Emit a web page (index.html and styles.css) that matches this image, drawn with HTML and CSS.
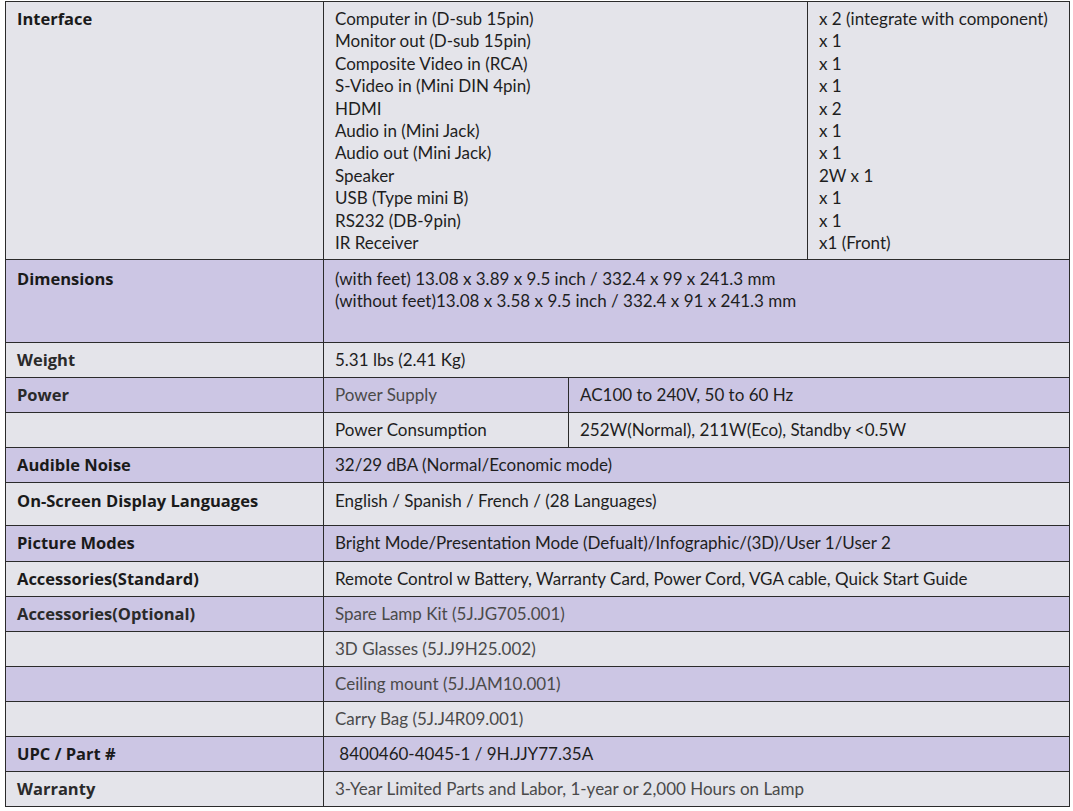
FILE: index.html
```html
<!DOCTYPE html>
<html>
<head>
<meta charset="utf-8">
<link rel="stylesheet" href="styles.css">
</head>
<body>
<table class="spec">
  <colgroup>
    <col class="c-label">
    <col class="c-a">
    <col class="c-b">
    <col class="c-c">
  </colgroup>
  <tr class="gray r-interface">
    <th>Interface</th>
    <td colspan="2">Computer in (D-sub 15pin)<br>Monitor out (D-sub 15pin)<br>Composite Video in (RCA)<br>S-Video in (Mini DIN 4pin)<br>HDMI<br>Audio in (Mini Jack)<br>Audio out (Mini Jack)<br>Speaker<br>USB (Type mini B)<br>RS232 (DB-9pin)<br>IR Receiver</td>
    <td>x 2 (integrate with component)<br>x 1<br>x 1<br>x 1<br>x 2<br>x 1<br>x 1<br>2W x 1<br>x 1<br>x 1<br>x1 (Front)</td>
  </tr>
  <tr class="purple r-dim">
    <th>Dimensions</th>
    <td colspan="3">(with feet) 13.08 x 3.89 x 9.5 inch / 332.4 x 99 x 241.3 mm<br>(without feet)13.08 x 3.58 x 9.5 inch / 332.4 x 91 x 241.3 mm</td>
  </tr>
  <tr class="gray r-std">
    <th class="soft">Weight</th>
    <td colspan="3">5.31 lbs (2.41 Kg)</td>
  </tr>
  <tr class="purple r-std">
    <th class="soft">Power</th>
    <td class="muted">Power Supply</td>
    <td colspan="2">AC100 to 240V, 50 to 60 Hz</td>
  </tr>
  <tr class="gray r-std">
    <th></th>
    <td>Power Consumption</td>
    <td colspan="2">252W(Normal), 211W(Eco), Standby &lt;0.5W</td>
  </tr>
  <tr class="purple r-std">
    <th>Audible Noise</th>
    <td colspan="3">32/29 dBA (Normal/Economic mode)</td>
  </tr>
  <tr class="gray r-osd">
    <th>On-Screen Display Languages</th>
    <td colspan="3">English / Spanish / French / (28 Languages)</td>
  </tr>
  <tr class="purple r-pm">
    <th>Picture Modes</th>
    <td colspan="3">Bright Mode/Presentation Mode (Defualt)/Infographic/(3D)/User 1/User 2</td>
  </tr>
  <tr class="gray r-std">
    <th>Accessories(Standard)</th>
    <td colspan="3">Remote Control w Battery, Warranty Card, Power Cord, VGA cable, Quick Start Guide</td>
  </tr>
  <tr class="purple r-std">
    <th class="soft">Accessories(Optional)</th>
    <td colspan="3" class="muted">Spare Lamp Kit (5J.JG705.001)</td>
  </tr>
  <tr class="gray r-std">
    <th></th>
    <td colspan="3" class="muted">3D Glasses (5J.J9H25.002)</td>
  </tr>
  <tr class="purple r-std">
    <th></th>
    <td colspan="3" class="muted">Ceiling mount (5J.JAM10.001)</td>
  </tr>
  <tr class="gray r-std">
    <th></th>
    <td colspan="3" class="muted">Carry Bag (5J.J4R09.001)</td>
  </tr>
  <tr class="purple r-std">
    <th>UPC / Part #</th>
    <td colspan="3">&nbsp;8400460-4045-1 / 9H.JJY77.35A</td>
  </tr>
  <tr class="gray r-std">
    <th class="soft">Warranty</th>
    <td colspan="3" class="muted">3-Year Limited Parts and Labor, 1-year or 2,000 Hours on Lamp</td>
  </tr>
</table>
</body>
</html>
```

FILE: styles.css
```css
html, body {
  margin: 0;
  padding: 0;
  background: #ffffff;
}

.spec {
  margin: 1px 0 0 5px;
  width: 1064px;
  table-layout: fixed;
  border-collapse: collapse;
  font-family: "Lato", "Open Sans", sans-serif;
  font-size: 17px;
  color: #1e1e1e;
}

.c-label { width: 318px; }
.c-a { width: 245px; }
.c-b { width: 239px; }
.c-c { width: 262px; }

.spec th,
.spec td {
  border: 1px solid #2b2b2b;
  padding: 6px 11px 0 11px;
  line-height: 22.4px;
  vertical-align: top;
  text-align: left;
  white-space: nowrap;
}

.spec th {
  font-family: "Open Sans", "Lato", sans-serif;
  font-size: 16.5px;
  font-weight: 700;
  color: #1a1a1a;
}

.spec th.soft {
  color: #2a2a2a;
}

.spec td.muted {
  color: #4a4a4a;
}

.gray { background: #e4e4ea; }
.purple { background: #ccc6e4; }

.r-interface { height: 258px; }
.r-dim { height: 83px; }
.r-std { height: 35px; }
.r-osd { height: 43px; }
.r-pm { height: 36px; }
.r-dim td, .r-dim th { padding-top: 8px; }
.r-osd td, .r-osd th { padding-top: 7px; }
.r-pm td, .r-pm th { padding-top: 6px; }
```
